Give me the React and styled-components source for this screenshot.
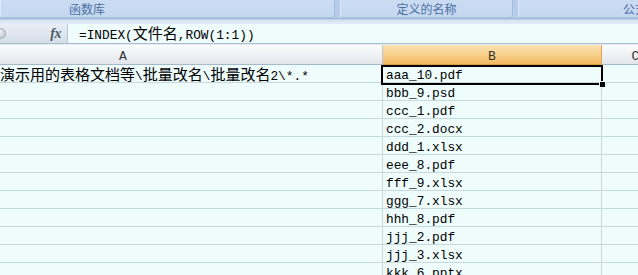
import React from "react";
import styled, { createGlobalStyle } from "styled-components";

const Global = createGlobalStyle`
  html, body { margin: 0; padding: 0; background: #eefcfc; }
  body { width: 638px; height: 275px; overflow: hidden; }
  #root { width: 638px; height: 275px; overflow: hidden; }
`;

const Page = styled.div`
  width: 638px;
  height: 275px;
  display: flex;
  flex-direction: column;
  overflow: hidden;
  background: #eefcfc;
`;

const Ribbon = styled.div`
  height: 18px;
  display: flex;
  gap: 5px;
  background: #b6cce8;
  overflow: hidden;
  flex-shrink: 0;
`;

const Group = styled.div`
  width: ${(p) => p.$w}px;
  flex-shrink: 0;
  display: flex;
  align-items: center;
  justify-content: ${(p) => (p.$center ? "center" : "flex-start")};
  padding-left: ${(p) => p.$pad || 0}px;
  box-sizing: border-box;
  background: linear-gradient(#cbdcf2, #c4d8f0);
  border-bottom: 1px solid #a9c0de;
  border-left: 1px solid #dce8f7;
  border-right: 1px solid #a4bcdc;
  border-radius: 0 0 3px 3px;
  font-family: "Noto Sans CJK SC", sans-serif;
  font-size: 12px;
  color: #4a70a4;
  white-space: nowrap;
`;

const RibbonEdge = styled.div`
  height: 6px;
  flex-shrink: 0;
  background: linear-gradient(#a3bbdb 0, #a3bbdb 1px, #d3e2f5 2px, #e2ecf8 6px);
`;

const FormulaBar = styled.div`
  height: 19px;
  display: flex;
  flex-shrink: 0;
  border-bottom: 1px solid #a8bcd2;
`;

const NameBox = styled.div`
  width: 68px;
  flex-shrink: 0;
  display: flex;
  align-items: center;
  justify-content: space-between;
  box-sizing: border-box;
  padding-right: 6px;
  background: linear-gradient(#e9eef5, #d5dee9);
  border-right: 1px solid #b3c4d6;
  overflow: hidden;
`;

const Knob = styled.span`
  width: 9px;
  height: 9px;
  margin-left: -5px;
  border-radius: 50%;
  background: radial-gradient(circle at 40% 35%, #f2f4f6, #b5bcc6);
  border: 1px solid #a3acb8;
`;

const Fx = styled.span`
  font-family: "Liberation Serif", serif;
  font-style: italic;
  font-weight: bold;
  font-size: 14px;
  color: #505a66;
  letter-spacing: -0.5px;
`;

const FormulaInput = styled.div`
  flex: 1;
  display: flex;
  align-items: center;
  padding-left: 11px;
  padding-top: 1px;
  background: #eefcfc;
  font-family: "Liberation Mono", monospace;
  font-size: 12.8px;
  color: #000;
  white-space: nowrap;
`;

const HeaderGap = styled.div`
  height: 1px;
  flex-shrink: 0;
  background: #e4eaf0;
`;

const Grid = styled.div`
  position: relative;
  flex: 1;
  overflow: hidden;
`;

const Row = styled.div`
  display: flex;
  height: ${(p) => p.$h}px;
  flex-shrink: 0;
`;

const ColHeader = styled.div`
  width: ${(p) => p.$w}px;
  margin-left: ${(p) => p.$ml || 0}px;
  flex-shrink: 0;
  box-sizing: border-box;
  display: flex;
  align-items: center;
  justify-content: center;
  padding-top: 3px;
  border-right: 1px solid ${(p) => (p.$active ? "#e0a450" : "#b9c6d3")};
  border-bottom: 1px solid ${(p) => (p.$active ? "#d99c45" : "#a7b8c9")};
  background: ${(p) =>
    p.$active
      ? "linear-gradient(#fbe3b4, #f8cf87 55%, #f3b862)"
      : "linear-gradient(#fbfcfd, #eef1f4 55%, #e2e6eb)"};
  font-family: "Liberation Mono", monospace;
  font-size: 13px;
  color: #333;
`;

const Cell = styled.div`
  width: ${(p) => p.$w}px;
  margin-left: ${(p) => p.$ml || 0}px;
  padding-left: ${(p) => p.$pad ?? 3}px;
  padding-top: 3px;
  flex-shrink: 0;
  box-sizing: border-box;
  display: flex;
  align-items: center;
  white-space: nowrap;
  border-right: 1px solid #c6dadd;
  border-bottom: 1px solid #c6dadd;
  font-family: "Liberation Mono", monospace;
  font-size: 12.8px;
  color: #000;
`;

const Line = styled.span`
  display: inline-block;
  line-height: 16px;
  white-space: nowrap;
`;

const Wide = styled.span`
  font-family: "Noto Sans CJK SC", sans-serif;
  font-size: 15px;
`;

const Selection = styled.div`
  position: absolute;
  left: 381px;
  top: 20px;
  width: 218px;
  height: 16px;
  border: 2px solid #000;
  pointer-events: none;
`;

const Handle = styled.div`
  position: absolute;
  right: -5px;
  bottom: -5px;
  width: 5px;
  height: 5px;
  background: #000;
  border: 1px solid #eefcfc;
`;

function Mixed({ text }) {
  const parts = text.split(/([\u3000-\u9fff\uff00-\uffef]+)/);
  return (
    <Line>
      {parts.map((p, i) =>
        /[\u3000-\u9fff\uff00-\uffef]/.test(p) ? <Wide key={i}>{p}</Wide> : p
      )}
    </Line>
  );
}

const files = [
  "aaa_10.pdf",
  "bbb_9.psd",
  "ccc_1.pdf",
  "ccc_2.docx",
  "ddd_1.xlsx",
  "eee_8.pdf",
  "fff_9.xlsx",
  "ggg_7.xlsx",
  "hhh_8.pdf",
  "jjj_2.pdf",
  "jjj_3.xlsx",
  "kkk_6.pptx",
];

export default function App() {
  return (
    <Page>
      <Global />
      <Ribbon>
        <Group $w={335} $pad={68}>函数库</Group>
        <Group $w={173} $center>定义的名称</Group>
        <Group $w={140} $pad={104}>公式审核</Group>
      </Ribbon>
      <RibbonEdge />
      <FormulaBar>
        <NameBox>
          <Knob />
          <Fx>fx</Fx>
        </NameBox>
        <FormulaInput>
          <Mixed text="=INDEX(文件名,ROW(1:1))" />
        </FormulaInput>
      </FormulaBar>
      <HeaderGap />
      <Grid>
        <Row $h={20}>
          <ColHeader $w={519} $ml={-136}>A</ColHeader>
          <ColHeader $w={219} $active>B</ColHeader>
          <ColHeader $w={68}>C</ColHeader>
        </Row>
        {files.map((f, i) => (
          <Row key={f} $h={18}>
            <Cell $w={519} $ml={-136} $pad={i === 0 ? 136 : 3}>
              {i === 0 ? <Mixed text="演示用的表格文档等\批量改名\批量改名2\*.*" /> : null}
            </Cell>
            <Cell $w={219}>{f}</Cell>
            <Cell $w={68} />
          </Row>
        ))}
        <Selection>
          <Handle />
        </Selection>
      </Grid>
    </Page>
  );
}
